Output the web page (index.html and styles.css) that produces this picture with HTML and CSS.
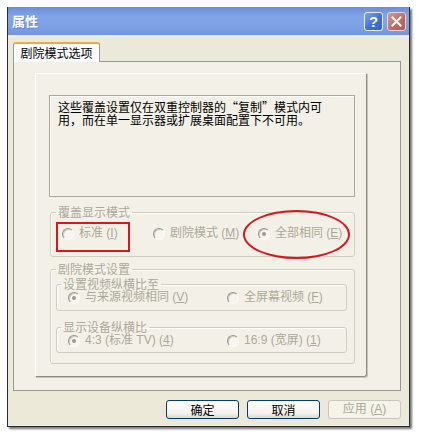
FILE: index.html
```html
<!DOCTYPE html>
<html lang="zh-CN">
<head>
<meta charset="utf-8">
<title>属性</title>
<link rel="stylesheet" href="styles.css">
</head>
<body>
<div class="window">
  <div class="titlebar">
    <span class="title">属性</span>
    <div class="tb-buttons">
      <span class="tb-btn help">?</span>
      <span class="tb-btn close"><svg width="11" height="11" viewBox="0 0 11 11"><path d="M1.5 1.5 L9.5 9.5 M9.5 1.5 L1.5 9.5" stroke="#fff" stroke-width="2" stroke-linecap="square"/></svg></span>
    </div>
  </div>
  <div class="client">
    <div class="tabs"><div class="tab">剧院模式选项</div></div>
    <div class="panel">
      <div class="raised">
        <div class="desc">这些覆盖设置仅在双重控制器的“复制”模式内可<br>用，而在单一显示器或扩展桌面配置下不可用。</div>
        <fieldset class="group g1">
          <legend>覆盖显示模式</legend>
          <div class="row row3">
            <label class="opt"><span class="radio"></span>标准 (<u>I</u>)</label>
            <label class="opt"><span class="radio"></span>剧院模式 (<u>M</u>)</label>
            <label class="opt"><span class="radio checked"></span>全部相同 (<u>E</u>)</label>
          </div>
        </fieldset>
        <fieldset class="group g2">
          <legend>剧院模式设置</legend>
          <fieldset class="group sub s1">
            <legend>设置视频纵横比至</legend>
            <div class="row row2">
              <label class="opt"><span class="radio checked"></span>与来源视频相同 (<u>V</u>)</label>
              <label class="opt"><span class="radio"></span>全屏幕视频 (<u>F</u>)</label>
            </div>
          </fieldset>
          <fieldset class="group sub s2">
            <legend>显示设备纵横比</legend>
            <div class="row row2">
              <label class="opt"><span class="radio checked"></span>4:3 (标准 TV) (<u>4</u>)</label>
              <label class="opt"><span class="radio"></span>16:9 (宽屏) (<u>1</u>)</label>
            </div>
          </fieldset>
        </fieldset>
      </div>
    </div>
    <div class="buttons">
      <span class="btn">确定</span>
      <span class="btn">取消</span>
      <span class="btn disabled">应用 (<u>A</u>)</span>
    </div>
  </div>
</div>
<div class="mark rect"></div>
<div class="mark ellipse"></div>
</body>
</html>
```
FILE: styles.css
```css
* { box-sizing: border-box; }
html, body { margin: 0; padding: 0; }
body {
  background: #fff;
  padding: 7px 0 0 7px;
  width: 422px;
  height: 439px;
  overflow: hidden;
  position: relative;
  font-family: "Noto Sans CJK SC", sans-serif;
  font-size: 12px;
  color: #000;
}
.window {
  width: 403px;
  height: 420px;
  border: 1px solid #2c2c38;
  border-top: none;
  background: #ece9d8;
  box-shadow: 2px 2px 2px rgba(0,0,0,0.55);
  display: flex;
  flex-direction: column;
}
.titlebar {
  height: 28px;
  display: flex;
  align-items: center;
  padding: 0 3px 0 4px;
  background: linear-gradient(#6a8edb, #83a4e8 35%, #7d9fe4 75%, #7294dd);
}
.title {
  flex: 1;
  color: #fff;
  font-weight: bold;
  font-size: 13px;
  line-height: 16px;
  text-shadow: 1px 1px 0 rgba(60, 80, 150, 0.35);
}
.tb-buttons { display: flex; gap: 4px; }
.tb-btn {
  width: 19px;
  height: 19px;
  border-radius: 3px;
  border: 1px solid #e8eefa;
  display: flex;
  align-items: center;
  justify-content: center;
}
.help {
  background: linear-gradient(135deg, #79a2f2, #3e6ed4 60%, #3563c8);
  color: #fff;
  font: bold 15px/1 "Liberation Sans", sans-serif;
}
.close {
  background: linear-gradient(135deg, #d79a92, #bd6b63 60%, #b05a52);
  border-color: #ead2d0;
}
.client {
  flex: 1;
  padding: 7px 8px 0 5px;
}
.tabs { display: flex; }
.tab {
  position: relative;
  z-index: 1;
  width: 87px;
  height: 20px;
  margin-bottom: -1px;
  border: 1px solid #919b9c;
  border-top: 2px solid #f3a83a;
  border-bottom: none;
  border-radius: 3px 3px 0 0;
  background: #fcfcfe;
  text-align: center;
  line-height: 17px;
  font-size: 12px;
}
.panel {
  height: 330px;
  border: 1px solid #919b9c;
  background: #f3f1e7;
  padding: 11px 0 0 21px;
}
.raised {
  width: 332px;
  height: 304px;
  border-top: 1px solid #fff;
  border-left: 1px solid #fff;
  border-right: 1px solid #8f8c7e;
  border-bottom: 1px solid #8f8c7e;
  border-radius: 0 0 3px 0;
  box-shadow: 1px 1px 0 #c9c6b6;
  padding: 21px 0 0 13px;
}
.desc {
  width: 306px;
  height: 102px;
  border: 1px solid #aca899;
  box-shadow: inset 1px 1px 0 #fff;
  padding: 4px 0 0 8px;
  line-height: 13px;
  white-space: nowrap;
}
.group {
  margin: 0;
  padding: 0;
  min-width: 0;
  border: 1px solid #d0ceBF;
  border-radius: 3px;
  box-shadow: inset 1px 1px 0 #fff;
}
.group legend {
  margin-left: 5px;
  padding: 0 2px;
  line-height: 14px;
  color: #aca899;
}
.g1 { width: 305px; margin: 8px 0 0 1px; }
.g2 { width: 305px; margin: 5px 0 0 1px; padding-bottom: 10px; }
.sub { width: 291px; margin: 1px 0 0 5px; }
.sub legend { margin-left: 4px; }
.s2 { margin-top: 9px; }
.row {
  display: grid;
  line-height: 13px;
}
.row3 {
  grid-template-columns: 91px 105px auto;
  padding: 8px 0 16px 11px;
}
.row2 {
  grid-template-columns: 159px auto;
  padding: 0 0 6px 11px;
}
.s2 .row2 { padding-bottom: 5px; }
.opt {
  display: flex;
  align-items: center;
  color: #aca899;
  white-space: nowrap;
  font-family: "Liberation Sans", "Noto Sans CJK SC", sans-serif;
  font-size: 12px;
}
.radio {
  position: relative;
  width: 12px;
  height: 12px;
  margin-right: 5px;
  border-radius: 50%;
  border: 1px solid;
  border-color: #98958a #fbfbf8 #fbfbf8 #98958a;
  background: #f6f5ef;
  box-shadow: inset 1px 1px 0 #cfccbf;
  flex: none;
}
.radio.checked::after {
  content: "";
  position: absolute;
  left: 3px;
  top: 3px;
  width: 4px;
  height: 4px;
  border-radius: 50%;
  background: #9d9a8c;
}
.buttons {
  display: flex;
  justify-content: flex-end;
  gap: 8px;
  margin-top: 9px;
}
.btn {
  width: 73px;
  height: 19px;
  border: 1px solid #003c74;
  border-radius: 3px;
  background: linear-gradient(#ffffff, #f4f3ee 70%, #dcd8cc);
  display: flex;
  align-items: center;
  justify-content: center;
  font-size: 12px;
  line-height: 13px;
}
.btn.disabled {
  border-color: #c9c7ba;
  background: #f5f4ea;
  color: #aca899;
  font-family: "Liberation Sans", "Noto Sans CJK SC", sans-serif;
}
.mark {
  position: absolute;
  border: 2px solid #d8161c;
}
.rect {
  left: 56px;
  top: 222px;
  width: 74px;
  height: 30px;
}
.ellipse {
  left: 243px;
  top: 210px;
  width: 107px;
  height: 49px;
  border-radius: 50%;
}
```
